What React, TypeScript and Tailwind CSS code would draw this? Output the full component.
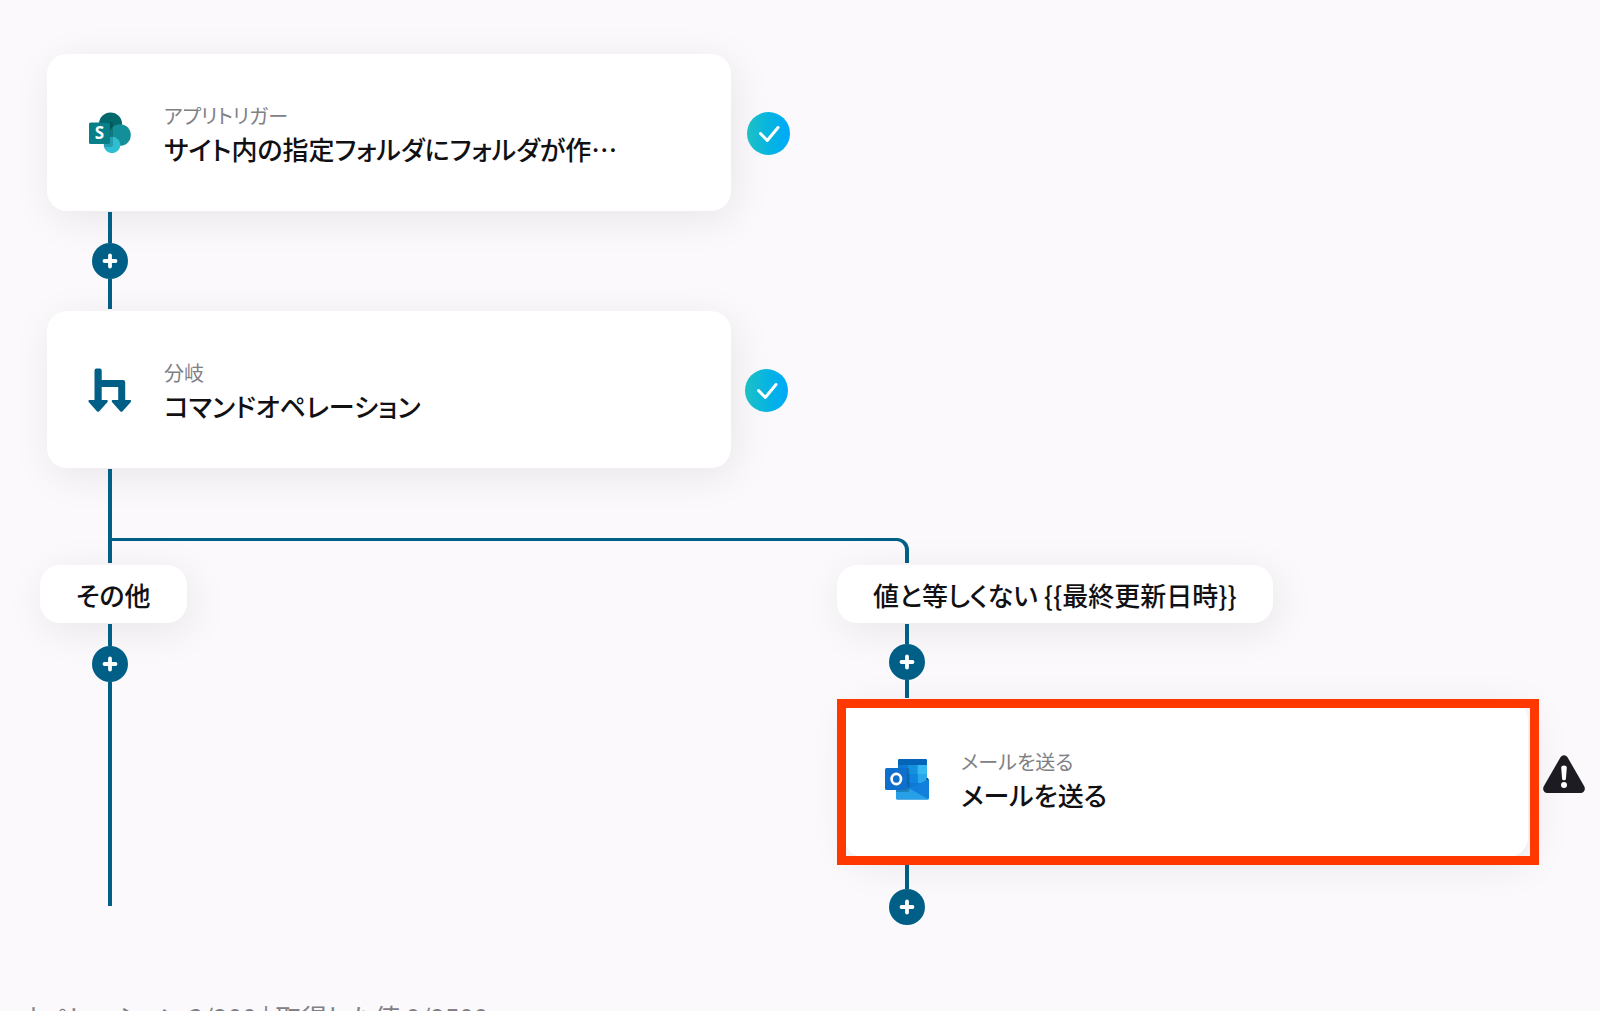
import React from 'react'

const SharePointIcon: React.FC = () => (
  <svg className="h-[42px] w-[42px]" viewBox="0 0 42 42" aria-hidden="true">
    <circle cx="21.5" cy="12" r="11.5" fill="#03686c" />
    <circle cx="31" cy="23" r="10.8" fill="#128f98" />
    <circle cx="23" cy="33" r="8.3" fill="#2fbdd2" />
    <path d="M11 10h11a2 2 0 0 1 2 2v21a2 2 0 0 1-2 2h-7V11z" fill="#000" opacity=".16" />
    <rect x="0" y="10.5" width="21" height="21.5" rx="1.6" fill="#067f88" />
    <text x="10.5" y="27.4" textAnchor="middle" fontSize="17" fontWeight="700" fill="#fff" fontFamily="Noto Sans, sans-serif">
      S
    </text>
  </svg>
)

const BranchIcon: React.FC = () => (
  <svg className="h-[44px] w-[44px]" viewBox="0 0 44 44" fill="#005f86" aria-hidden="true">
    <path d="M6.5 2.5a2 2 0 0 1 2-2h3.2a2 2 0 0 1 2 2V12h21.3a2.2 2.2 0 0 1 2.2 2.2V32h4.4c1.6 0 2 1.2 1 2.2l-8 9c-.8.8-1.6.8-2.4 0l-8-9c-1-1-.6-2.2 1-2.2h5V19H13.7v13h4.6c1.6 0 2 1.2 1 2.2l-8 9c-.8.8-1.6.8-2.4 0l-8-9c-1-1-.6-2.2 1-2.2h4.6z" />
  </svg>
)

const OutlookIcon: React.FC = () => (
  <svg className="h-[44px] w-[44px]" viewBox="0 0 44 44" aria-hidden="true">
    <path d="M13 3.5A1.5 1.5 0 0 1 14.5 2h26A1.5 1.5 0 0 1 42 3.5V32H13z" fill="#0f78d4" />
    <path d="M13 3.5A1.5 1.5 0 0 1 14.5 2h26A1.5 1.5 0 0 1 42 3.5V8H13z" fill="#0364b8" />
    <path d="M23 8h9.5v9H23z" fill="#1490df" />
    <path d="M32.5 8H42v9h-9.5z" fill="#35b8f1" />
    <path d="M32.5 17H42v9h-9.5z" fill="#28a8ea" />
    <path d="M23 17h9.5v9H23z" fill="#0f84dc" />
    <path d="M13 17h10v9H13z" fill="#0364b8" />
    <path d="M42 20.5l2 2-3 2z" fill="#0a2767" />
    <path d="M11 24l15 6.5L44 22v19a1.5 1.5 0 0 1-1.5 1.5h-30A1.5 1.5 0 0 1 11 41z" fill="#127fdc" />
    <path d="M11 24l32.5 18.2-1 .3h-30A1.5 1.5 0 0 1 11 41z" fill="#28a0e8" />
    <path d="M11 11h11.5a2 2 0 0 1 2 2v20a2 2 0 0 1-2 2H11z" fill="#000" opacity=".2" />
    <rect x="0" y="11" width="22.5" height="22" rx="1.6" fill="#0f6fcc" />
    <ellipse cx="11.3" cy="22" rx="4.7" ry="5.2" fill="none" stroke="#fff" strokeWidth="2.7" />
  </svg>
)

const CheckBadge: React.FC = () => (
  <span className="mt-px flex h-[43px] w-[43px] shrink-0 items-center justify-center rounded-full bg-linear-to-r from-[#1cc0c4] to-[#00a8fa]">
    <svg className="h-[43px] w-[43px]" viewBox="0 0 43 43" fill="none" stroke="#fff" strokeWidth={3} strokeLinecap="round" strokeLinejoin="round" role="img" aria-label="完了">
      <path d="M13.5 21.5l6.8 7L31 15.5" />
    </svg>
  </span>
)

const WarningIcon: React.FC = () => (
  <svg className="mb-2.5 h-[38px] w-[42px] shrink-0" viewBox="0 0 42 38" role="img" aria-label="警告">
    <path d="M17.5 2.2c1.6-2.7 5.4-2.7 7 0L41.2 31.3c1.7 2.9 0 6.7-3.7 6.7h-33C.8 38-.9 34.2.8 31.3z" fill="#1d1c22" />
    <path d="M18.2 12.8c-.1-3 5.7-3 5.6 0l-.9 11c-.2 2-3.6 2-3.8 0z" fill="#fff" />
    <circle cx="21" cy="30" r="3" fill="#fff" />
  </svg>
)

const AddButton: React.FC = () => (
  <button
    type="button"
    aria-label="オペレーションを追加"
    className="flex h-9 w-9 shrink-0 items-center justify-center rounded-full bg-[#005f86] hover:bg-[#004d6d]">
    <svg className="h-4 w-4" viewBox="0 0 16 16" stroke="#fff" strokeWidth={3.8} strokeLinecap="round" aria-hidden="true">
      <path d="M8 2.5v11M2.5 8h11" />
    </svg>
  </button>
)

type StepCardProps = {
  icon: React.ReactNode
  label: string
  title: string
}

const StepCard: React.FC<StepCardProps> = ({ icon, label, title }) => (
  <article className="flex w-[684px] items-center gap-8 rounded-[20px] bg-white px-[41px] py-[41px] shadow-[4px_8px_40px_rgba(0,0,0,0.08)]">
    <div className="flex w-11 shrink-0 justify-center">{icon}</div>
    <div className="min-w-0 pt-[7px]">
      <p className="text-[20px] leading-7 text-[#808085]">{label}</p>
      <h2 className="pb-0.5 text-[26px] leading-[38px] font-medium whitespace-nowrap text-[#111114]">{title}</h2>
    </div>
  </article>
)

const BranchLabel: React.FC<{ children: React.ReactNode }> = ({ children }) => (
  <div className="rounded-[20px] bg-white px-9 pt-[11px] pb-[9px] text-[26px] leading-[38px] font-medium whitespace-nowrap text-[#111114] shadow-[4px_8px_40px_rgba(0,0,0,0.08)]">
    {children}
  </div>
)

const App: React.FC = () => {
  return (
    <main className="h-screen overflow-hidden bg-[#fbf9fc] pt-[54px] font-['Noto_Sans_CJK_JP',sans-serif] [font-feature-settings:'palt']">
      <div className="flex items-center gap-4 pl-[47px]">
        <StepCard icon={<SharePointIcon />} label="アプリトリガー" title="サイト内の指定フォルダにフォルダが作…" />
        <CheckBadge />
      </div>

      <div className="ml-[92px] flex w-9 flex-col items-center pt-px pb-0.5">
        <div className="h-[31px] w-1 bg-[#005f86]" />
        <AddButton />
        <div className="h-[30px] w-1 bg-[#005f86]" />
      </div>

      <div className="flex items-center gap-3.5 pl-[47px]">
        <StepCard icon={<BranchIcon />} label="分岐" title="コマンドオペレーション" />
        <CheckBadge />
      </div>

      {/* 分岐線 */}
      <div className="ml-[108px] flex items-end pt-px pb-0.5">
        <div className="h-[94px] w-1 bg-[#005f86]" />
        <div className="h-[25px] w-[797px] rounded-tr-xl border-t-3 border-r-4 border-[#005f86]" />
      </div>

      <div className="flex items-start pl-10">
        <section className="flex w-[797px] shrink-0 flex-col items-start">
          <BranchLabel>その他</BranchLabel>
          <div className="ml-[52px] flex w-9 flex-col items-center pt-px">
            <div className="h-[22px] w-1 bg-[#005f86]" />
            <AddButton />
            <div className="h-56 w-1 bg-[#005f86]" />
          </div>
        </section>

        <section className="flex shrink-0 flex-col items-start">
          <BranchLabel>値と等しくない {'{{最終更新日時}}'}</BranchLabel>
          <div className="ml-[52px] flex w-9 flex-col items-center pt-px pb-0.5">
            <div className="h-5 w-1 bg-[#005f86]" />
            <AddButton />
            <div className="h-[18px] w-1 bg-[#005f86]" />
          </div>
          <div className="flex items-center gap-[15px] pl-[7px]">
            <div className="relative">
              <StepCard icon={<OutlookIcon />} label="メールを送る" title="メールを送る" />
              {/* 設定が必要なステップの強調枠 */}
              <div className="pointer-events-none absolute -top-px -right-[11px] -bottom-2 -left-[7px] border-[9px] border-[#ff3800]" />
            </div>
            <WarningIcon />
          </div>
          <div className="ml-[52px] flex w-9 flex-col items-center pt-2">
            <div className="h-6 w-1 bg-[#005f86]" />
            <AddButton />
          </div>
        </section>
      </div>

      <p className="pt-[74px] pl-[18px] text-[26px] leading-9 whitespace-nowrap text-[#808085]">
        オペレーション 3/200 | 取得した値 0/2500
      </p>
    </main>
  )
}

export default App
